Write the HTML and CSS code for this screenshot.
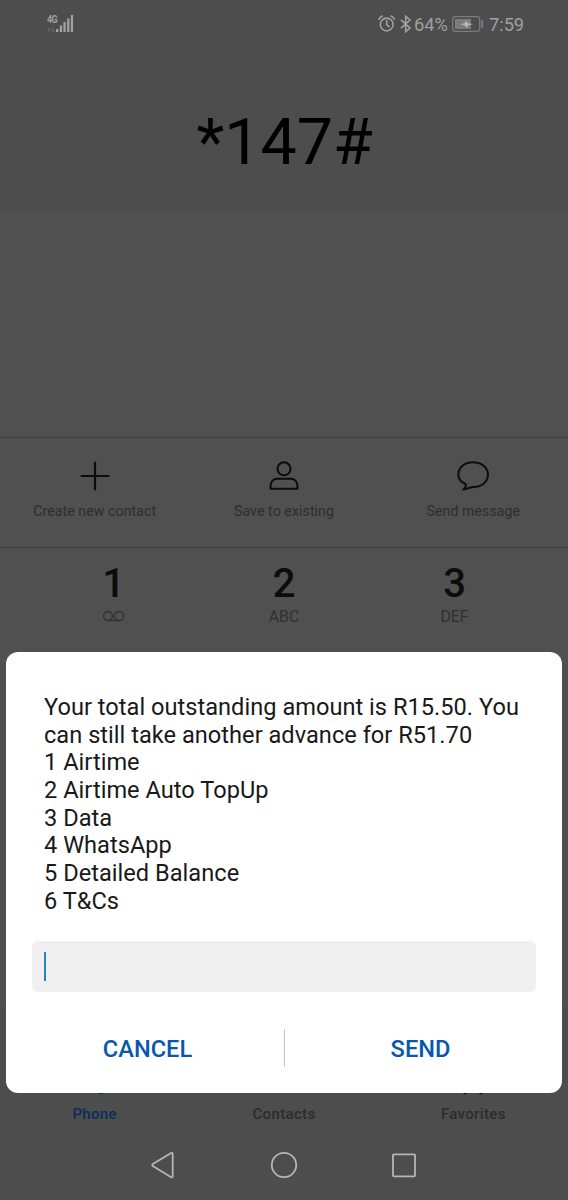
FILE: index.html
```html
<!DOCTYPE html>
<html lang="en">
<head>
<meta charset="utf-8">
<title>Phone</title>
<link rel="stylesheet" href="styles.css">
</head>
<body>
<div class="screen">
  <header class="top">
    <div class="status">
      <div class="signal">
        <div class="network"><span class="gen">4G</span><svg width="8" height="6" viewBox="0 0 8 6"><path d="M2 6V1M.5 2.500 2 1l1.500 1.500M6 0v5M4.500 3.500 6 5l1.500-1.500" fill="none" stroke="#686868"/></svg></div>
        <svg width="18" height="17" viewBox="0 0 18 17" fill="#a0a0a0"><path d="M0 14h2.300v3H0zM3.800 10.500h2.300V17H3.800zM7.400 7h2.300v10H7.400zM11.100 3.500h2.300V17h-2.300zM14.800 0h2.300v17h-2.300z"/></svg>
      </div>
      <div class="indicators">
        <svg class="alarm" width="18" height="18" viewBox="0 0 18 18" fill="none" stroke="#a0a0a0" stroke-width="1.600" stroke-linecap="round"><circle cx="8.700" cy="9.500" r="6.400"/><path d="M8.700 5.700v4l2.200 2M1 4.200Q2 2 4.300 1M16.400 4.200Q15.400 2 13.100 1"/></svg>
        <svg class="bluetooth" width="12" height="18" viewBox="0 0 12 18" fill="none" stroke="#a0a0a0" stroke-width="1.600"><path d="m1 4.800 9 8.200-4.300 3.700V1.300L10 5l-9 8.200"/></svg>
        <span class="percent">64%</span>
        <svg class="battery" width="32" height="17" viewBox="0 0 32 17"><rect x=".7" y=".7" width="27" height="14.600" rx="2.500" fill="none" stroke="#7c7c7c" stroke-width="1.300"/><path d="M3 3h16v10H3z" fill="#7c7c7c"/><path d="m8 8.500 5-1.500.5-2.500 3.500 3 4 .5-5 1.500-1 2.500-3-3z" fill="#b4b4b4"/><path d="M29.300 4h1.700v8h-1.700z" fill="#7c7c7c"/></svg>
        <span class="clock">7:59</span>
      </div>
    </div>
    <div class="number">*147#</div>
  </header>
  <div class="history"></div>
  <div class="actions">
    <div class="action"><svg width="36" height="36" viewBox="0 0 36 36"><path d="M18 4.500v27M4.500 18h27" stroke="#0c0c0c" stroke-width="2.200" stroke-linecap="round"/></svg><span>Create new contact</span></div>
    <div class="action"><svg width="36" height="36" viewBox="0 0 36 36" fill="none" stroke="#0c0c0c" stroke-width="2"><circle cx="18" cy="10.800" r="6.500"/><path d="M11 20.800h14a6.400 6.400 0 0 1 6.400 6.400v3.600H4.600v-3.600a6.400 6.400 0 0 1 6.400-6.400z" stroke-linejoin="round"/></svg><span>Save to existing</span></div>
    <div class="action"><svg width="36" height="36" viewBox="0 0 36 36" fill="none" stroke="#0c0c0c" stroke-width="2" stroke-linejoin="round"><path d="M8.300 31.600c2.300-1.800 3-4 2.200-5.600C6 24 3.300 20.700 3.300 16.500 3.300 9.500 9.700 4.200 18 4.200s15 5.200 15 12.400-6.400 12.300-14.200 12.300c-3.500-.2-5.700 2.300-10.500 2.700z"/></svg><span>Send message</span></div>
  </div>
  <div class="keypad">
    <div class="key"><b>1</b><svg class="voicemail" width="24" height="18" viewBox="0 0 24 18" fill="none" stroke="#303030" stroke-width="1.300"><circle cx="6" cy="8" r="4.500"/><circle cx="17" cy="8" r="4.500"/><path d="M6 12.500h11"/></svg></div>
    <div class="key"><b>2</b><span>ABC</span></div>
    <div class="key"><b>3</b><span>DEF</span></div>
  </div>
  <nav class="tabs">
    <div class="tab active"><svg width="30" height="30" viewBox="0 0 30 30" fill="#092d5b"><path d="M7 3c2-2 4-1 5 2l1 4-3 3c1 3 4 7 7 9l5-2c3 1 6 3 5 5-2 5-8 5.500-12 1C6 18 3 8 7 3z"/></svg><span>Phone</span></div>
    <div class="tab"><svg width="30" height="30" viewBox="0 0 30 30" fill="none" stroke="#171717" stroke-width="2"><circle cx="15" cy="7" r="5"/><path d="M4 23c0-10 22-10 22 0z"/></svg><span>Contacts</span></div>
    <div class="tab"><svg width="30" height="30" viewBox="0 0 30 30" fill="none" stroke="#171717" stroke-width="2" stroke-linejoin="round"><path d="m15 2 4 8 9 1.500-6.500 6.300L23.500 27.500 15 23l-8.500 4.500 2-9.700L2 11.500 11 10z"/></svg><span>Favorites</span></div>
  </nav>
  <div class="system-nav">
    <svg width="30" height="30" viewBox="0 0 30 30"><path d="M23.700 3.700v22.800a1 1 0 0 1-1.500.8L3.800 16.100a1.200 1.200 0 0 1 0-2L22.200 2.900a1 1 0 0 1 1.500.8z"/></svg>
    <svg width="30" height="30" viewBox="0 0 30 30"><circle cx="15" cy="15" r="12.200"/></svg>
    <svg width="30" height="30" viewBox="0 0 30 30"><rect x="4" y="4.300" width="22" height="22" rx=".8"/></svg>
  </div>
  <section class="dialog">
    <p class="message"><span class="line">Your total outstanding amount is R15.50. You</span><span class="line">can still take another advance for R51.70</span><span class="line">1 Airtime</span><span class="line">2 Airtime Auto TopUp</span><span class="line">3 Data</span><span class="line">4 WhatsApp</span><span class="line">5 Detailed Balance</span><span class="line">6 T&amp;Cs</span></p>
    <div class="field"><i class="caret"></i></div>
    <div class="buttons"><div class="button">CANCEL</div><i class="divider"></i><div class="button">SEND</div></div>
  </section>
</div>
</body>
</html>
```
FILE: styles.css
```css
* { box-sizing: border-box; }
body { margin: 0; font-family: Roboto, sans-serif; background: #505050; }
svg { display: block; flex: none; }
.screen { position: relative; width: 568px; height: 1200px; overflow: hidden; display: flex; flex-direction: column; background: #505050; }
.top { height: 210px; flex: none; background: #4d4d4d; }
.status { height: 48px; padding: 0 44px 0 47px; display: flex; justify-content: space-between; color: #a0a0a0; }
.signal { display: flex; padding-top: 15px; }
.network { width: 9px; display: flex; flex-direction: column; gap: 3px; }
.gen { font-size: 10px; line-height: 9px; font-weight: 700; letter-spacing: -.6px; transform: scaleX(.9); transform-origin: left; }
.indicators { display: flex; align-items: center; font-size: 18.200px; line-height: 48px; }
.alarm { margin-right: 4px; }
.bluetooth { margin-right: 2px; }
.percent { width: 38px; padding-top: 1px; }
.clock { width: 35px; padding-top: 1px; margin-left: 5px; }
.number { padding: 56px 0 0 1px; text-align: center; font-size: 64.500px; line-height: 76px; color: #000; }
.history { height: 227px; flex: none; }
.actions { height: 110px; flex: none; border-top: 1px solid #404040; display: grid; grid-template-columns: repeat(3, 1fr); padding-top: 20px; }
.action { display: flex; flex-direction: column; align-items: center; font-size: 14.200px; line-height: 18px; letter-spacing: .05px; color: #2e2e2e; gap: 8px; }
.keypad { height: 460px; flex: none; border-top: 1px solid #404040; display: grid; grid-template-columns: repeat(3, 170.500px); justify-content: center; padding-top: 12px; }
.key { display: flex; flex-direction: column; align-items: center; font-size: 15.800px; line-height: 18px; color: #303030; }
.key b { font-size: 40px; line-height: 48px; font-weight: 500; color: #0c0c0c; }
.tabs { height: 123px; flex: none; display: grid; grid-template-columns: repeat(3, 1fr); padding-top: 56px; background: #4d4d4d; }
.tab { display: flex; flex-direction: column; align-items: center; justify-content: flex-end; height: 60px; font-size: 15px; line-height: 18px; font-weight: 500; letter-spacing: .35px; color: #2c2c2c; gap: 9px; }
.active { color: #092d5b; }
.system-nav { height: 70px; flex: none; display: flex; justify-content: center; gap: 90px; padding-top: 20px; background: #4d4d4d; fill: none; stroke: #b5b5b5; stroke-width: 1.800px; }
.dialog { position: absolute; left: 6px; top: 652px; width: 556px; height: 440.500px; border-radius: 12px; background: #fff; padding: 42px 26px 0; }
.message { margin: 0; padding-left: 12px; font-size: 23.600px; line-height: 27.670px; letter-spacing: .02px; color: #191919; white-space: nowrap; }
.line { display: block; }
.field { margin-top: 26px; width: 504px; height: 50.500px; border-radius: 6px; background: #f0f0f0; padding: 11px 12px; }
.caret { display: block; width: 2px; height: 29px; background: #2583c9; }
.buttons { margin: 37px -20px 0; display: grid; grid-template-columns: 272px 1px 272px; justify-content: center; align-items: center; text-align: center; font-size: 23.600px; line-height: 38px; font-weight: 500; color: #0857ae; }
.button { padding-top: 1px; }
.divider { height: 38px; background: #c4c4c4; }
```
